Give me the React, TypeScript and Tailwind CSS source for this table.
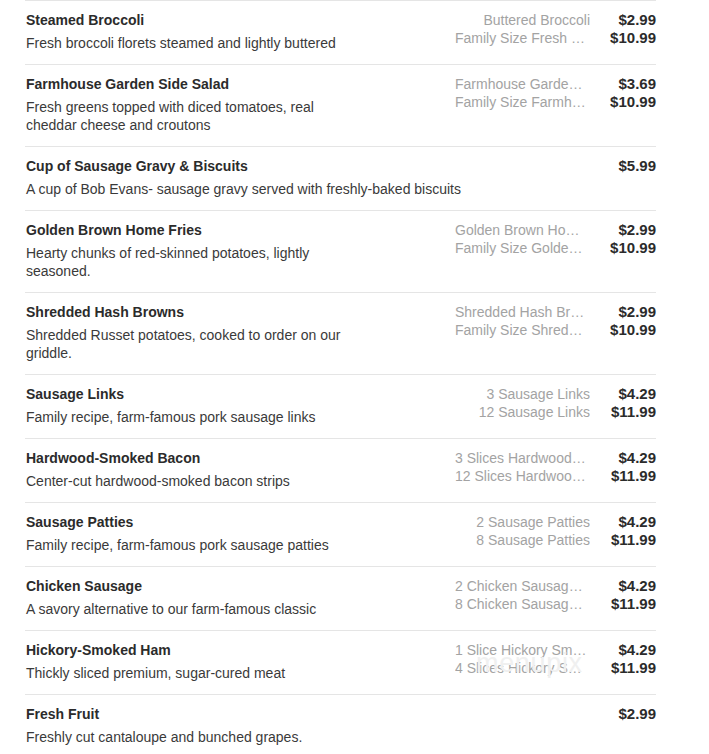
const items = [
  {
    title: "Steamed Broccoli",
    desc: "Fresh broccoli florets steamed and lightly buttered",
    options: [
      { label: "Buttered Broccoli", price: "$2.99" },
      { label: "Family Size Fresh Broccoli", price: "$10.99" },
    ],
  },
  {
    title: "Farmhouse Garden Side Salad",
    desc: "Fresh greens topped with diced tomatoes, real cheddar cheese and croutons",
    options: [
      { label: "Farmhouse Garden Side Salad", price: "$3.69" },
      { label: "Family Size Farmhouse Salad", price: "$10.99" },
    ],
  },
  {
    title: "Cup of Sausage Gravy & Biscuits",
    desc: "A cup of Bob Evans- sausage gravy served with freshly-baked biscuits",
    options: [{ label: "", price: "$5.99" }],
  },
  {
    title: "Golden Brown Home Fries",
    desc: "Hearty chunks of red-skinned potatoes, lightly seasoned.",
    options: [
      { label: "Golden Brown Home Fries", price: "$2.99" },
      { label: "Family Size Golden Brown Home Fries", price: "$10.99" },
    ],
  },
  {
    title: "Shredded Hash Browns",
    desc: "Shredded Russet potatoes, cooked to order on our griddle.",
    options: [
      { label: "Shredded Hash Browns", price: "$2.99" },
      { label: "Family Size Shredded Hash Browns", price: "$10.99" },
    ],
  },
  {
    title: "Sausage Links",
    desc: "Family recipe, farm-famous pork sausage links",
    options: [
      { label: "3 Sausage Links", price: "$4.29" },
      { label: "12 Sausage Links", price: "$11.99" },
    ],
  },
  {
    title: "Hardwood-Smoked Bacon",
    desc: "Center-cut hardwood-smoked bacon strips",
    options: [
      { label: "3 Slices Hardwood-Smoked Bacon", price: "$4.29" },
      { label: "12 Slices Hardwood-Smoked Bacon", price: "$11.99" },
    ],
  },
  {
    title: "Sausage Patties",
    desc: "Family recipe, farm-famous pork sausage patties",
    options: [
      { label: "2 Sausage Patties", price: "$4.29" },
      { label: "8 Sausage Patties", price: "$11.99" },
    ],
  },
  {
    title: "Chicken Sausage",
    desc: "A savory alternative to our farm-famous classic",
    options: [
      { label: "2 Chicken Sausage Links", price: "$4.29" },
      { label: "8 Chicken Sausage Links", price: "$11.99" },
    ],
  },
  {
    title: "Hickory-Smoked Ham",
    desc: "Thickly sliced premium, sugar-cured meat",
    options: [
      { label: "1 Slice Hickory Smoked Ham", price: "$4.29" },
      { label: "4 Slices Hickory Smoked Ham", price: "$11.99" },
    ],
  },
  {
    title: "Fresh Fruit",
    desc: "Freshly cut cantaloupe and bunched grapes.",
    options: [{ label: "", price: "$2.99" }],
  },
];

export default function App() {
  const hasLabels = (opts: { label: string }[]) => opts.some((o) => o.label);

  return (
    <div className="relative min-h-[754px] overflow-hidden bg-white font-['Liberation_Sans',Arial,sans-serif] text-[14px] leading-[18px]">
      <div className="ml-[25px] w-[631px]">
        {items.map((item, i) => (
          <div key={i} className="flex border-t border-[#e5e5e5] pt-[10px] pb-[12px]">
            <div className={hasLabels(item.options) ? "w-[330px]" : "flex-1"}>
              <div className="pl-px font-bold text-[#2b2b2b]">{item.title}</div>
              <div className="mt-[5px] pl-px text-[#3a3a3a]">{item.desc}</div>
            </div>
            {hasLabels(item.options) && <div className="flex-1" />}
            <div className="flex flex-col">
              {item.options.map((o, j) => (
                <div key={j} className="flex">
                  {o.label && (
                    <div className="w-[135px] truncate text-right text-[#a3a3a3]">{o.label}</div>
                  )}
                  <div className="w-[66px] text-right text-[15px] font-bold text-[#2b2b2b]">{o.price}</div>
                </div>
              ))}
            </div>
          </div>
        ))}
      </div>
      <div className="pointer-events-none absolute left-[476px] top-[654px] text-[27px] tracking-wide text-[#f0f0f0]">
        menupix
      </div>
    </div>
  );
}
